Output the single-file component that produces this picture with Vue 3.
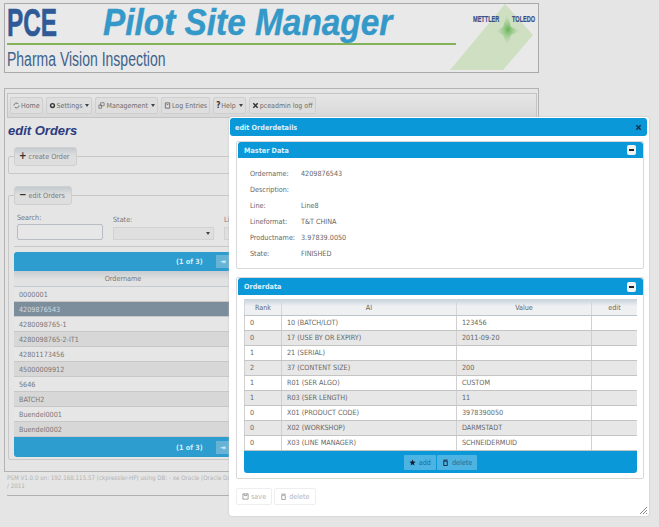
<script setup>
const menu = [
  { label: 'Home', icon: 'home' },
  { label: 'Settings', icon: 'gear', caret: true },
  { label: 'Management', icon: 'copy', caret: true },
  { label: 'Log Entries', icon: 'doc' },
  { label: 'Help', icon: 'help', caret: true },
  { label: 'pceadmin log off', icon: 'close' }
]

const orders = [
  '0000001', '4209876543', '4280098765-1', '4280098765-2-IT1', '42801173456',
  '45000009912', '5646', 'BATCH2', 'Buendel0001', 'Buendel0002'
]

const master = [
  ['Ordername:', '4209876543'],
  ['Description:', ''],
  ['Line:', 'Line8'],
  ['Lineformat:', 'T&T CHINA'],
  ['Productname:', '3.97839.0050'],
  ['State:', 'FINISHED']
]

const details = [
  ['0', '10 (BATCH/LOT)', '123456'],
  ['0', '17 (USE BY OR EXPIRY)', '2011-09-20'],
  ['1', '21 (SERIAL)', ''],
  ['2', '37 (CONTENT SIZE)', '200'],
  ['1', 'R01 (SER ALGO)', 'CUSTOM'],
  ['1', 'R03 (SER LENGTH)', '11'],
  ['0', 'X01 (PRODUCT CODE)', '3978390050'],
  ['0', 'X02 (WORKSHOP)', 'DARMSTADT'],
  ['0', 'X03 (LINE MANAGER)', 'SCHNEIDERMUID']
]
</script>

<template>
  <div class="page">
    <header class="banner">
      <svg class="logo-shape" width="84" height="68" viewBox="0 0 84 68">
        <defs>
          <radialGradient id="spark">
            <stop offset="0" stop-color="#62b254" />
            <stop offset="1" stop-color="#bfd8ae" stop-opacity="0" />
          </radialGradient>
        </defs>
        <polygon points="0,66 55,0 83,31 53,66" fill="#cfe0c2" />
        <polygon points="57,9 61,23 71,27 61,31 57,42 53,31 45,27 53,23" fill="url(#spark)" />
      </svg>
      <div class="banner-top">
        <span class="pce">PCE</span>
        <span class="app-title">Pilot Site Manager</span>
      </div>
      <div class="green-line"></div>
      <div class="subtitle">Pharma Vision Inspection</div>
      <span class="brand brand-left">METTLER</span>
      <span class="brand brand-right">TOLEDO</span>
    </header>

    <main class="content">
      <nav class="menubar">
        <button v-for="item in menu" :key="item.label" class="menu-btn">
          <svg v-if="item.icon === 'home'" class="ico" viewBox="0 0 8 8"><path d="M1 4a3 3 0 0 1 5-2M7 4a3 3 0 0 1-5 2" fill="none" stroke="#666" /></svg>
          <svg v-if="item.icon === 'gear'" class="ico" viewBox="0 0 8 8"><circle cx="4" cy="4" r="2.2" fill="none" stroke="#333" stroke-width="1.6" /></svg>
          <svg v-if="item.icon === 'copy'" class="ico" viewBox="0 0 8 8"><path d="M3 .8h4v3.6H3zM1 3.4h3v3.8H1z" fill="none" stroke="#666" stroke-width=".8" /></svg>
          <svg v-if="item.icon === 'doc'" class="ico" viewBox="0 0 8 8"><path d="M1.5 1h5v6h-5zM3 3h2" fill="none" stroke="#666" /></svg>
          <b v-if="item.icon === 'help'" class="help-mark">?</b>
          <svg v-if="item.icon === 'close'" class="ico" viewBox="0 0 8 8"><path d="M1.5 1.5l5 5M6.5 1.5l-5 5" stroke="#333" stroke-width="1.7" /></svg>
          <span>{{ item.label }}</span>
          <i v-if="item.caret" class="caret"></i>
        </button>
      </nav>

      <h1 class="page-title">edit Orders</h1>

      <section class="fieldset fs-create">
        <div class="legend"><b class="sign">+</b> create Order</div>
      </section>

      <section class="fieldset fs-edit">
        <div class="legend"><b class="sign">−</b> edit Orders</div>
        <div class="filters">
          <label class="filter filter-search">Search:<span class="input"></span></label>
          <label class="filter filter-state">State:<span class="select"><i class="caret dark"></i></span></label>
          <label class="filter filter-line">Line:<span class="select"></span></label>
        </div>
        <div class="orders">
          <div class="pager pager-top">
            <span class="pager-text">(1 of 3)</span><span class="pager-btn">⇥</span>
          </div>
          <div class="orders-head"><span class="orders-col">Ordername</span></div>
          <div v-for="(order, i) in orders" :key="order" class="order-row" :class="{ odd: i % 2 === 1, selected: i === 1 }">{{ order }}</div>
          <div class="pager pager-bottom">
            <span class="pager-text">(1 of 3)</span><span class="pager-btn">⇥</span>
          </div>
        </div>
      </section>
    </main>

    <footer class="foot">PSM V1.0.0 on: 192.168.115.57 (ckpressler-HP) using DB: - xe Oracle (Oracle Database 11g Express Edition)<br>/ 2011</footer>

    <div class="dialog">
      <div class="dialog-title">
        <span>edit Orderdetails</span>
        <svg class="dialog-close" viewBox="0 0 8 8"><path d="M1.5 1.5l5 5M6.5 1.5l-5 5" stroke="#17344a" stroke-width="1.8" /></svg>
      </div>

      <section class="panel panel-master">
        <div class="panel-head"><span>Master Data</span><span class="toggle"></span></div>
        <div class="master-grid">
          <template v-for="row in master" :key="row[0]">
            <span>{{ row[0] }}</span><span>{{ row[1] }}</span>
          </template>
        </div>
      </section>

      <section class="panel panel-data">
        <div class="panel-head"><span>Orderdata</span><span class="toggle"></span></div>
        <div class="table-wrap">
          <table class="detail-table">
            <thead>
              <tr><th class="c-rank">Rank</th><th class="c-ai">AI</th><th class="c-value">Value</th><th>edit</th></tr>
            </thead>
            <tbody>
              <tr v-for="(row, i) in details" :key="row[1]" :class="{ odd: i % 2 === 1 }">
                <td>{{ row[0] }}</td><td>{{ row[1] }}</td><td>{{ row[2] }}</td><td></td>
              </tr>
            </tbody>
          </table>
          <div class="table-foot">
            <button class="foot-btn">
              <svg class="ico" viewBox="0 0 8 8"><path d="M4 .5l1 2.400 2.600.2-2 1.700.6 2.600L4 6 1.800 7.400l.6-2.600-2-1.700L3 2.900z" fill="#123" /></svg>
              add
            </button>
            <button class="foot-btn">
              <svg class="ico" viewBox="0 0 8 8"><path d="M2 2.500h4V7.500H2zM1.500 1.300h5" fill="none" stroke="#123" /></svg>
              delete
            </button>
          </div>
        </div>
      </section>

      <div class="dialog-actions">
        <button class="action-btn">
          <svg class="ico" viewBox="0 0 8 8"><path d="M1 1h6v6H1zM2.500 1v2h3V1" fill="none" stroke="#999" /></svg>
          save
        </button>
        <button class="action-btn">
          <svg class="ico" viewBox="0 0 8 8"><path d="M2 2.500h4V7.500H2zM1.500 1.300h5" fill="none" stroke="#999" /></svg>
          delete
        </button>
      </div>

      <svg class="grip" width="9" height="9" viewBox="0 0 9 9"><path d="M8 1L1 8M8 4L4 8M8 7L7 8" stroke="#777" stroke-width=".9" /></svg>
    </div>
  </div>
</template>

<style scoped>
.page {
  position: relative;
  width: 659px;
  height: 527px;
  overflow: hidden;
  box-sizing: border-box;
  padding: 3px 0 0 4px;
  background: #e5e5e5;
  color: #666;
  font-family: "DejaVu Sans", sans-serif;
  font-stretch: condensed;
  font-size: 7.2px;
}

.banner {
  position: relative;
  box-sizing: border-box;
  width: 535px;
  height: 70px;
  border: 1px solid #a9a9a9;
  background: #e9e9e9;
}

.banner-top {
  display: flex;
  align-items: center;
  height: 37px;
  padding-left: 2px;
}

.pce {
  display: inline-block;
  flex: none;
  width: 96px;
  font: bold 39px/37px "Liberation Sans", sans-serif;
  color: #2f5a97;
  -webkit-text-stroke: 0.6px #2f5a97;
  transform: scaleX(0.625);
  transform-origin: left center;
}

.app-title {
  font: italic bold 37.5px/37px "Liberation Sans", sans-serif;
  color: #3498c8;
  -webkit-text-stroke: 0.4px #3498c8;
  white-space: nowrap;
  transform: scaleX(0.89);
  transform-origin: left center;
}

.green-line {
  width: 449px;
  height: 2px;
  margin: 2px 0 0 2px;
  background: #84b35a;
}

.subtitle {
  margin: 4px 0 0 2px;
  font: 20px/21px "Liberation Sans", sans-serif;
  color: #3f628c;
  white-space: nowrap;
  transform: scaleX(0.7);
  transform-origin: left center;
}

.logo-shape {
  position: absolute;
  left: 445px;
  top: 0;
}

.brand {
  position: absolute;
  top: 10px;
  font: bold 9px/10px "Liberation Sans", sans-serif;
  color: #3a4f8a;
  -webkit-text-stroke: 0.2px #3a4f8a;
  transform: scaleX(0.62);
  transform-origin: left center;
}

.brand-left { left: 468px; }
.brand-right { left: 507px; }

.content {
  box-sizing: border-box;
  width: 535px;
  height: 384px;
  margin-top: 15px;
  padding: 4px 1px 0 2px;
  border: 1px solid #b3b3b3;
}

.menubar {
  display: flex;
  gap: 3px;
  box-sizing: border-box;
  height: 25px;
  padding: 3px 2px;
  border: 1px solid #c4c4c4;
  background: linear-gradient(#e6e6e6, #d8d8d8);
}

.menu-btn {
  display: flex;
  align-items: center;
  gap: 1px;
  height: 17px;
  padding: 0 2px;
  border: 1px solid #cfcfcf;
  border-radius: 2px;
  background: #dedede;
  color: #6d6d6d;
  font: 7px "DejaVu Sans", sans-serif;
  font-stretch: condensed;
  white-space: nowrap;
}

.ico {
  width: 7px;
  height: 7px;
  flex: none;
}

.help-mark {
  color: #333;
  font-size: 8px;
}

.caret {
  width: 0;
  height: 0;
  margin-left: 2px;
  border: 2.5px solid transparent;
  border-top: 3px solid #444;
  border-bottom: 0;
}

.page-title {
  margin: 5px 0 1px 1px;
  font: italic bold 13px/15px "Liberation Sans", sans-serif;
  color: #2b3b7e;
}

.fieldset {
  position: relative;
  box-sizing: border-box;
  width: 480px;
  margin-left: 1px;
  border: 1px solid #c8c8c8;
  border-radius: 2px;
}

.fs-create {
  height: 18px;
  margin-top: 18px;
}

.fs-edit {
  height: 265px;
  margin-top: 21px;
  padding: 0 5px;
}

.legend {
  position: absolute;
  left: 5px;
  top: -10px;
  height: 17px;
  padding: 0 6px 0 4px;
  line-height: 17px;
  color: #777;
  background: linear-gradient(#c2cad0, #dedede 45%);
  border: 1px solid #cfcfcf;
  border-radius: 3px;
}

.sign {
  color: #333;
  font-size: 10px;
  line-height: 10px;
}

.filters {
  display: flex;
  height: 50px;
  padding: 17px 3px 0;
  box-sizing: border-box;
  gap: 10px;
}

.filter {
  display: flex;
  flex-direction: column;
  gap: 2px;
  color: #777;
}

.filter-search { width: 86px; }

.filter-state,
.filter-line {
  gap: 3px;
  margin-top: 2px;
}

.filter-state { width: 101px; }
.filter-line { width: 60px; }

.input {
  display: block;
  box-sizing: border-box;
  height: 16px;
  border: 1px solid #b8bcc4;
  border-radius: 2px;
  background: #e7e7e7;
}

.select {
  position: relative;
  display: block;
  box-sizing: border-box;
  height: 13px;
  border: 1px solid #d2d2d2;
  background: #dfdfdf;
}

.caret.dark {
  position: absolute;
  right: 3px;
  top: 4px;
}

.orders {
  width: 352px;
  padding-top: 5px;
  border-top: 1px solid #c8c8c8;
}

.pager {
  position: relative;
  display: flex;
  align-items: center;
  box-sizing: border-box;
  height: 19px;
  padding-left: 162px;
  background: #2d9ccf;
  color: #d6ebf5;
  font-weight: bold;
}

.pager-top { border-radius: 3px 3px 0 0; }

.pager-bottom {
  height: 20px;
  border-radius: 0 0 3px 3px;
}

.pager-text {
  width: 40px;
  white-space: nowrap;
}

.pager-btn {
  display: block;
  width: 14px;
  height: 13px;
  line-height: 13px;
  text-align: center;
  background: #67b3d6;
  color: #d6ebf5;
}

.orders-head {
  display: flex;
  height: 16px;
  line-height: 16px;
  background: linear-gradient(#c8ccd0, #e2e2e2 60%);
  border-bottom: 1px solid #c3cad3;
  box-sizing: border-box;
  color: #777;
}

.orders-col {
  width: 218px;
  text-align: center;
}

.order-row {
  box-sizing: border-box;
  height: 15px;
  padding-left: 5px;
  line-height: 15px;
  background: #e6e6e6;
  border-bottom: 1px solid #c8c8c8;
  color: #777;
}

.order-row.odd { background: #d7d7d7; }

.order-row.selected {
  background: #7c8d9c;
  color: #d5dbe0;
}

.foot {
  width: 540px;
  margin: 2px 0 0 3px;
  padding-bottom: 5px;
  font-size: 6.2px;
  line-height: 8px;
  color: #b2b2b2;
  white-space: nowrap;
  border-bottom: 1px solid #b0b0b0;
}

.dialog {
  position: absolute;
  left: 229px;
  top: 117px;
  box-sizing: border-box;
  width: 420px;
  height: 399px;
  padding: 1px 2px 0 1px;
  background: #fff;
  border-radius: 3px;
  box-shadow: 0 0 2px #bbb;
  color: #666;
}

.dialog-title {
  display: flex;
  justify-content: space-between;
  align-items: center;
  height: 18px;
  padding: 0 5px 0 5px;
  background: #0b98d9;
  border-radius: 3px;
  color: #d9f0fb;
  font-weight: bold;
}

.dialog-close {
  width: 7px;
  height: 7px;
}

.panel {
  box-sizing: border-box;
  width: 408px;
  margin-left: 6px;
  border: 1px solid #d8d8d8;
  border-radius: 2px;
  background: #fff;
}

.panel-master {
  height: 128px;
  margin-top: 5px;
}

.panel-data {
  height: 202px;
  margin-top: 8px;
}

.panel-head {
  display: flex;
  justify-content: space-between;
  align-items: center;
  box-sizing: border-box;
  height: 16px;
  margin-left: 1px;
  padding: 0 7px 0 6px;
  background: #0b98d9;
  border-radius: 3px 3px 0 0;
  color: #d9f0fb;
  font-weight: bold;
}

.panel-data .panel-head {
  height: 17px;
}

.toggle {
  position: relative;
  width: 9px;
  height: 10px;
  background: #f2f2f2;
  border-radius: 2px;
}

.toggle::after {
  content: "";
  position: absolute;
  left: 2px;
  top: 4px;
  width: 5px;
  height: 2px;
  background: #222;
}

.master-grid {
  display: grid;
  grid-template-columns: 51px 1fr;
  grid-auto-rows: 16px;
  align-items: center;
  padding: 7px 0 0 13px;
}

.table-wrap {
  width: 393px;
  margin: 4px 0 0 7px;
}

.detail-table {
  width: 393px;
  border-collapse: collapse;
  table-layout: fixed;
  color: #666;
}

.detail-table th {
  height: 16px;
  padding: 0;
  font-weight: normal;
  background: linear-gradient(#c6d1db, #eef0f2 45%);
  border-left: 1px solid #d2d8de;
  border-bottom: 1px solid #bcc4cc;
}

.c-rank { width: 36px; }
.c-ai { width: 174px; }
.c-value { width: 134px; }

.detail-table td {
  height: 14px;
  padding: 0 0 0 5px;
  line-height: 14px;
  white-space: nowrap;
  border-left: 1px solid #d0d0d0;
  border-bottom: 1px solid #c4c4c4;
}

.detail-table tr.odd td { background: #e7e7e7; }

.table-foot {
  display: flex;
  justify-content: center;
  align-items: center;
  gap: 1px;
  height: 22px;
  background: #0b98d9;
  border-radius: 0 0 3px 3px;
}

.foot-btn {
  display: flex;
  align-items: center;
  gap: 3px;
  height: 15px;
  padding: 0 5px;
  border: 0;
  border-radius: 1px;
  background: #4cb3e2;
  color: #1d6d96;
  font: 7.2px "DejaVu Sans", sans-serif;
  font-stretch: condensed;
}

.dialog-actions {
  display: flex;
  gap: 2px;
  margin: 9px 0 0 6px;
}

.action-btn {
  display: flex;
  align-items: center;
  gap: 2px;
  height: 17px;
  padding: 0 5px;
  border: 1px solid #eee;
  border-radius: 2px;
  background: #fff;
  color: #b5b5b5;
  font: 7.2px "DejaVu Sans", sans-serif;
  font-stretch: condensed;
}

.grip {
  position: absolute;
  right: 1px;
  bottom: 1px;
}
</style>

<style>
body {
  margin: 0;
  overflow: hidden;
}
</style>
